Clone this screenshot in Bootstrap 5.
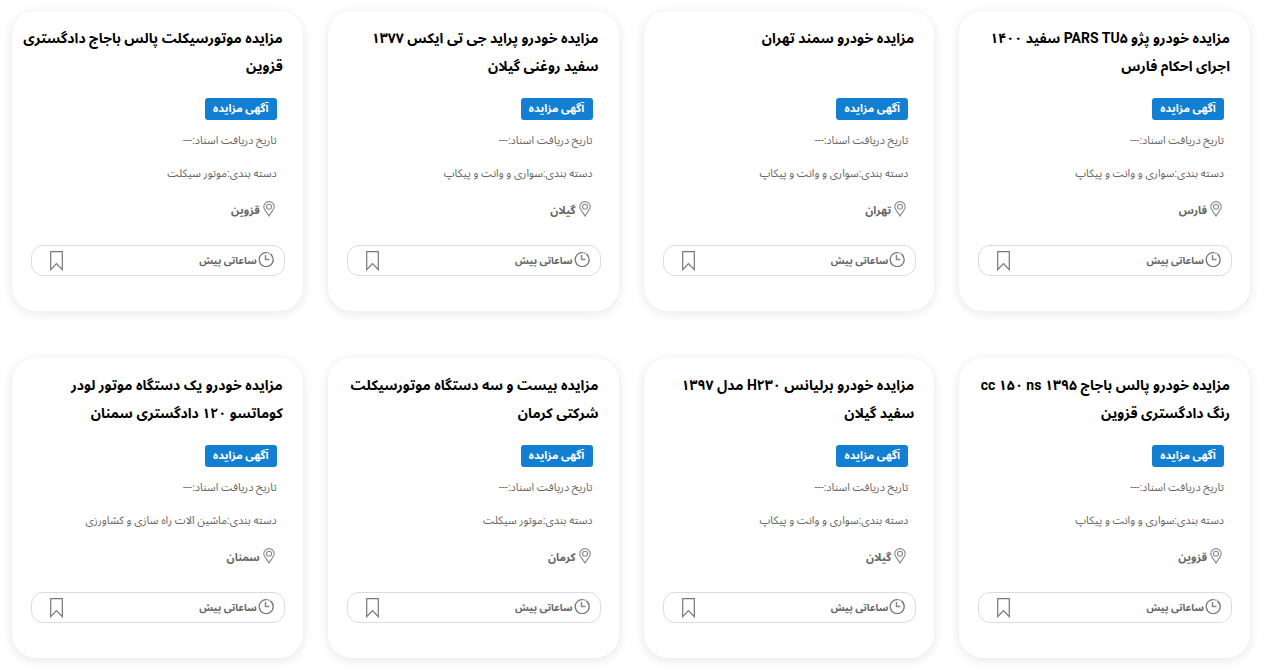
<!DOCTYPE html>
<html lang="fa" dir="rtl">
<head>
<meta charset="utf-8">
<meta name="viewport" content="width=device-width, initial-scale=1">
<title>آگهی‌های مزایده</title>
<link href="https://cdn.jsdelivr.net/npm/bootstrap@5.3.0/dist/css/bootstrap.min.css" rel="stylesheet">
<style>
  body { font-family: Roboto, "Noto Sans Arabic", "DejaVu Sans", sans-serif; background: #fff; }
  .ad-list { padding: 11px 2px 13px 0; }
  .ad-rows { row-gap: 47px; }
  .ad-item { padding: 0 13px 0 12px; }
  .ad-card { min-height: 300px; border: 0; border-radius: 24px; box-shadow: 0 2px 12px rgba(0,0,0,.1); padding: 13px 18px 35px 19px; }
  .ad-title { min-height: 56px; margin: 0 2px 18px -12px; font-size: 14px; line-height: 28px; font-weight: 700; white-space: pre-line; }
  .ad-title a { color: #000; }
  .ad-info { padding: 0 8px; color: #666; font-size: 11px; }
  .ad-tag { background: #127fd2; border-radius: 3px; width: 72px; height: 22px; padding: 0; font-size: 11px; line-height: 22px; font-weight: 700; }
  .ad-line { height: 33px; line-height: 33px; margin: 0; white-space: nowrap; }
  .ad-tag + .ad-line { margin-top: 4px; }
  .ad-place { height: 42px; gap: 3px; padding-right: 2px; font-weight: 700; }
  .ad-foot { height: 31px; margin-top: 13px; border: 1px solid #dcdcdc; border-radius: 12px; padding: 0 10px 0 18px; color: #666; font-size: 10px; }
  .ad-time { gap: 1px; font-weight: 700; }
  .ad-save { line-height: 0; }
  svg { fill: none; stroke: #777; flex: none; }
</style>
</head>
<body>
<main class="container-fluid ad-list">
  <div class="row g-0 ad-rows" id="ads"></div>
</main>
<template id="ad">
  <div class="col-3 ad-item">
    <article class="card ad-card">
      <h2 class="ad-title"><a class="text-decoration-none" href="#"></a></h2>
      <div class="ad-info">
        <span class="badge d-block ad-tag">آگهی مزایده</span>
        <p class="ad-line">تاریخ دریافت اسناد:---</p>
        <p class="ad-line">دسته بندی:<span class="ad-cat"></span></p>
        <div class="d-flex align-items-center ad-place">
          <svg class="mb-1" width="12" height="16" viewBox="0 0 12 16"><path stroke="#888" stroke-width="1.100" d="M6 15C4.500 12 .8 8.800 .8 5.800a5.200 5.200 0 0 1 10.400 0C11.200 8.800 7.500 12 6 15Z"/><circle stroke="#888" stroke-width="1.100" cx="6" cy="5.800" r="2.500"/></svg>
          <span class="ad-city"></span>
        </div>
      </div>
      <div class="d-flex align-items-center justify-content-between ad-foot">
        <span class="d-flex align-items-center ad-time">
          <svg class="mb-1" width="16" height="16" viewBox="0 0 16 16"><path stroke-width="1.300" d="M12.300 2.900A7 7 0 1 1 9.500 1.700M12.900 3.500A7 7 0 0 1 14.800 7M10.300 1.800l1.200.5"/><path stroke-width="1.500" stroke="#888" d="M7.500 4v4.500H11.500"/></svg>
          <span>ساعاتی پیش</span>
        </span>
        <button type="button" class="btn p-0 border-0 ad-save" aria-label="نشان کردن">
          <svg width="13" height="20" viewBox="0 0 13 20"><path stroke-width="1.200" d="M.7.700h11.600v18L6.500 12.700.7 18.700Z"/></svg>
        </button>
      </div>
    </article>
  </div>
</template>
<script src="https://cdn.jsdelivr.net/npm/bootstrap@5.3.0/dist/js/bootstrap.bundle.min.js"></script>
<script>
  const car = "سواری و وانت و پیکاپ", bike = "موتور سیکلت";
  const ads = [
    ["مزایده خودرو پژو PARS TU۵ سفید ۱۴۰۰\nاجرای احکام فارس", car, "فارس"],
    ["مزایده خودرو سمند تهران", car, "تهران"],
    ["مزایده خودرو پراید جی تی ایکس ۱۳۷۷\nسفید روغنی گیلان", car, "گیلان"],
    ["مزایده موتورسیکلت پالس باجاج دادگستری\nقزوین", bike, "قزوین"],
    ["مزایده خودرو پالس باجاج cc ۱۵۰ ns ۱۳۹۵\nرنگ دادگستری قزوین", car, "قزوین"],
    ["مزایده خودرو برلیانس H۲۳۰ مدل ۱۳۹۷\nسفید گیلان", car, "گیلان"],
    ["مزایده بیست و سه دستگاه موتورسیکلت\nشرکتی کرمان", bike, "کرمان"],
    ["مزایده خودرو یک دستگاه موتور لودر\nکوماتسو ۱۲۰ دادگستری سمنان", "ماشین آلات راه سازی و کشاورزی", "سمنان"]
  ];
  const list = document.getElementById("ads"), tpl = document.getElementById("ad");
  for (const [title, cat, city] of ads) {
    const n = tpl.content.cloneNode(true);
    n.querySelector(".ad-title a").textContent = title;
    n.querySelector(".ad-cat").textContent = cat;
    n.querySelector(".ad-city").textContent = city;
    list.append(n);
  }
</script>
</body>
</html>
